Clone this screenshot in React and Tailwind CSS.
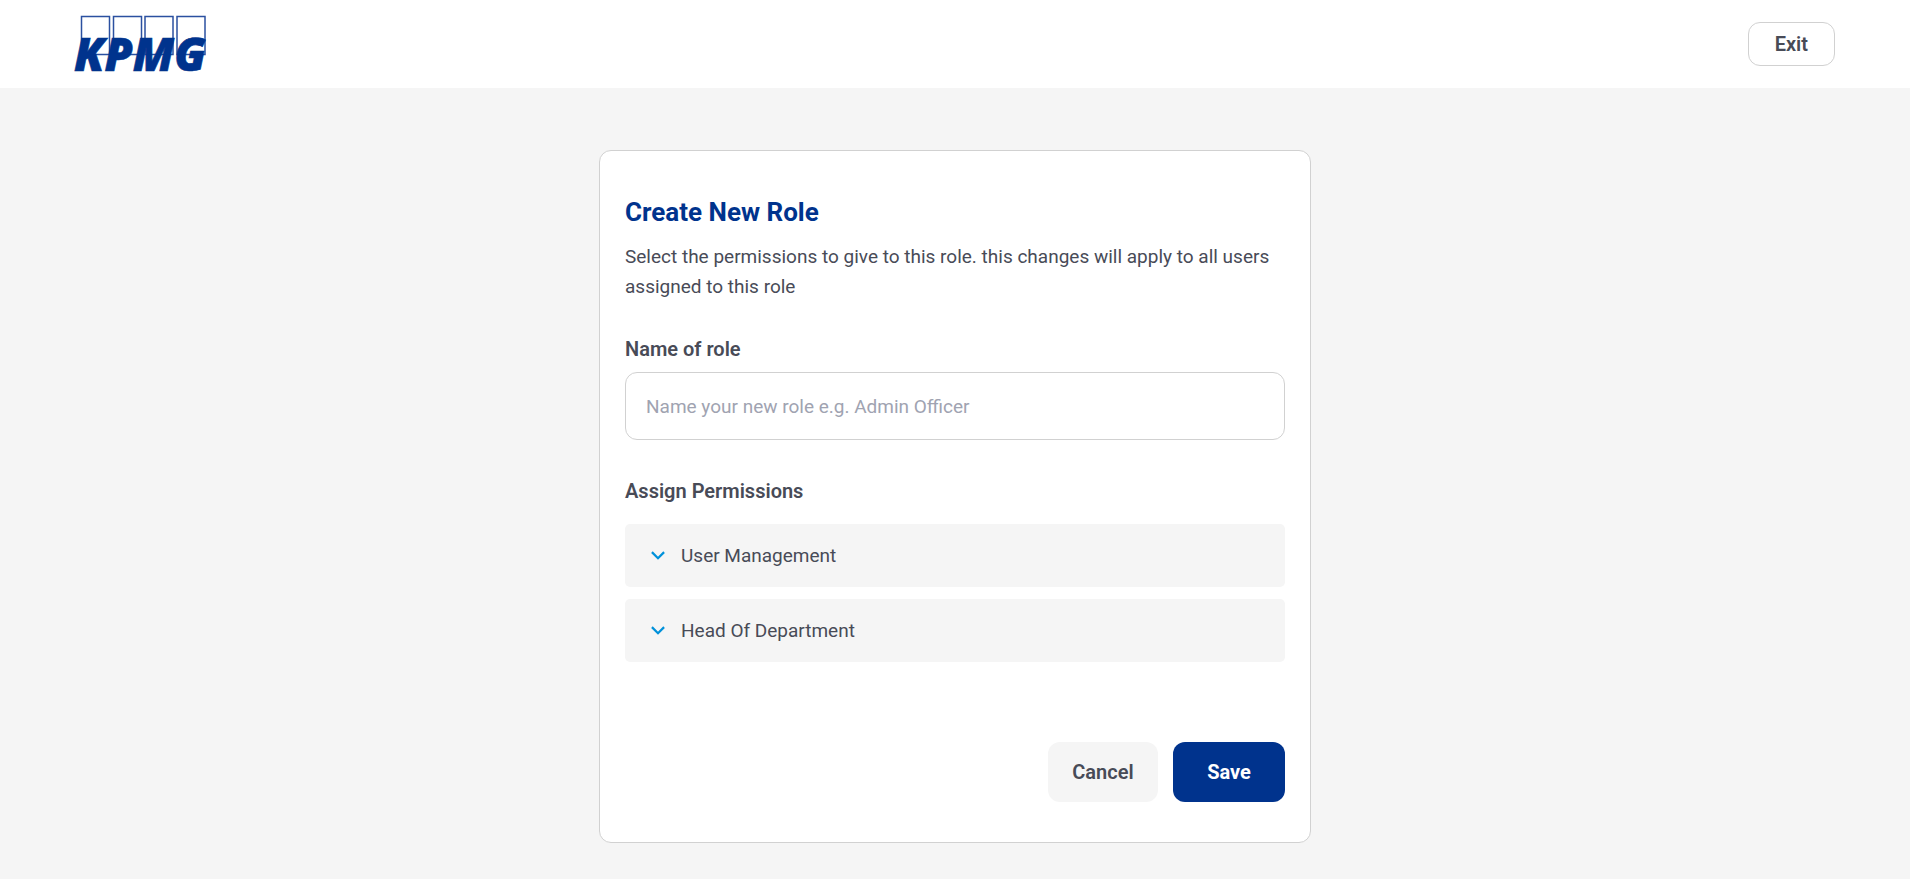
import { useState } from 'react';

function Logo() {
  return (
    <svg width="144" height="80" viewBox="0 -8 144 80" role="img" aria-label="KPMG">
      <g fill="white" stroke="#2b50a0" strokeWidth="1.5">
        <rect x="11.5" y="4.5" width="28" height="38" />
        <rect x="43.5" y="4.5" width="28" height="38" />
        <rect x="75" y="4.5" width="28" height="38" />
        <rect x="107" y="4.5" width="28" height="38" />
      </g>
      <text x="4" y="58.5" fill="#00338d" stroke="#00338d" strokeWidth="0.6" fontFamily="'Open Sans', sans-serif" fontWeight="800" fontStyle="italic" fontSize="45.5">
        KPMG
      </text>
    </svg>
  );
}

function Chevron({ open }) {
  return (
    <svg width="14" height="9" viewBox="0 0 14 9" fill="none" aria-hidden="true" className={open ? 'rotate-180' : ''}>
      <path d="M0.9 1.1L7 7.2l6.1-6.1" stroke="#0091da" strokeWidth="2.2" />
    </svg>
  );
}

function PermissionGroup({ name }) {
  const [open, setOpen] = useState(false);
  return (
    <button
      type="button"
      aria-expanded={open}
      onClick={() => setOpen(!open)}
      className="flex w-full items-center gap-4 rounded-[5px] bg-[#f5f5f5] py-4 pl-[26px] text-left text-[19px] leading-[31px]"
    >
      <Chevron open={open} />
      {name}
    </button>
  );
}

export default function App() {
  return (
    <div className="min-h-screen bg-white pr-2.5 font-['Roboto',sans-serif] text-[#484b57]">
      <header className="flex h-[88px] items-center justify-between bg-white pr-[75px] pl-[70px]">
        <a href="#">
          <Logo />
        </a>
        <button type="button" className="h-11 rounded-xl border border-[#d1d1d1] px-[26px] text-xl font-semibold">
          Exit
        </button>
      </header>
      <main className="min-h-[calc(100vh-88px)] bg-[#f5f5f5] pt-[62px] pb-9">
        <form className="mx-auto max-w-[712px] rounded-xl border border-[#d1d1d1] bg-white px-[25px] pt-[43px] pb-10">
          <h1 className="text-[26px] leading-9 font-bold text-[#00338d]">Create New Role</h1>
          <p className="mt-3 text-[19px] leading-[30px]">
            Select the permissions to give to this role. this changes will apply to all users assigned to this role
          </p>
          <label htmlFor="role" className="mt-8 block text-xl leading-[30px] font-semibold">
            Name of role
          </label>
          <input
            id="role"
            placeholder="Name your new role e.g. Admin Officer"
            className="mt-2 h-[68px] w-full rounded-xl border border-[#d1d1d1] px-5 text-[19px] placeholder:text-[#a0a3b1]"
          />
          <h2 className="mt-9 text-xl leading-[30px] font-semibold">Assign Permissions</h2>
          <div className="mt-[18px] flex flex-col gap-3">
            <PermissionGroup name="User Management" />
            <PermissionGroup name="Head Of Department" />
          </div>
          <div className="mt-20 flex justify-end gap-[15px]">
            <button type="button" className="h-[60px] w-[110px] rounded-xl bg-[#f5f5f5] text-xl font-semibold">
              Cancel
            </button>
            <button type="submit" className="h-[60px] w-28 rounded-xl bg-[#00338d] text-xl font-bold text-white">
              Save
            </button>
          </div>
        </form>
      </main>
    </div>
  );
}
